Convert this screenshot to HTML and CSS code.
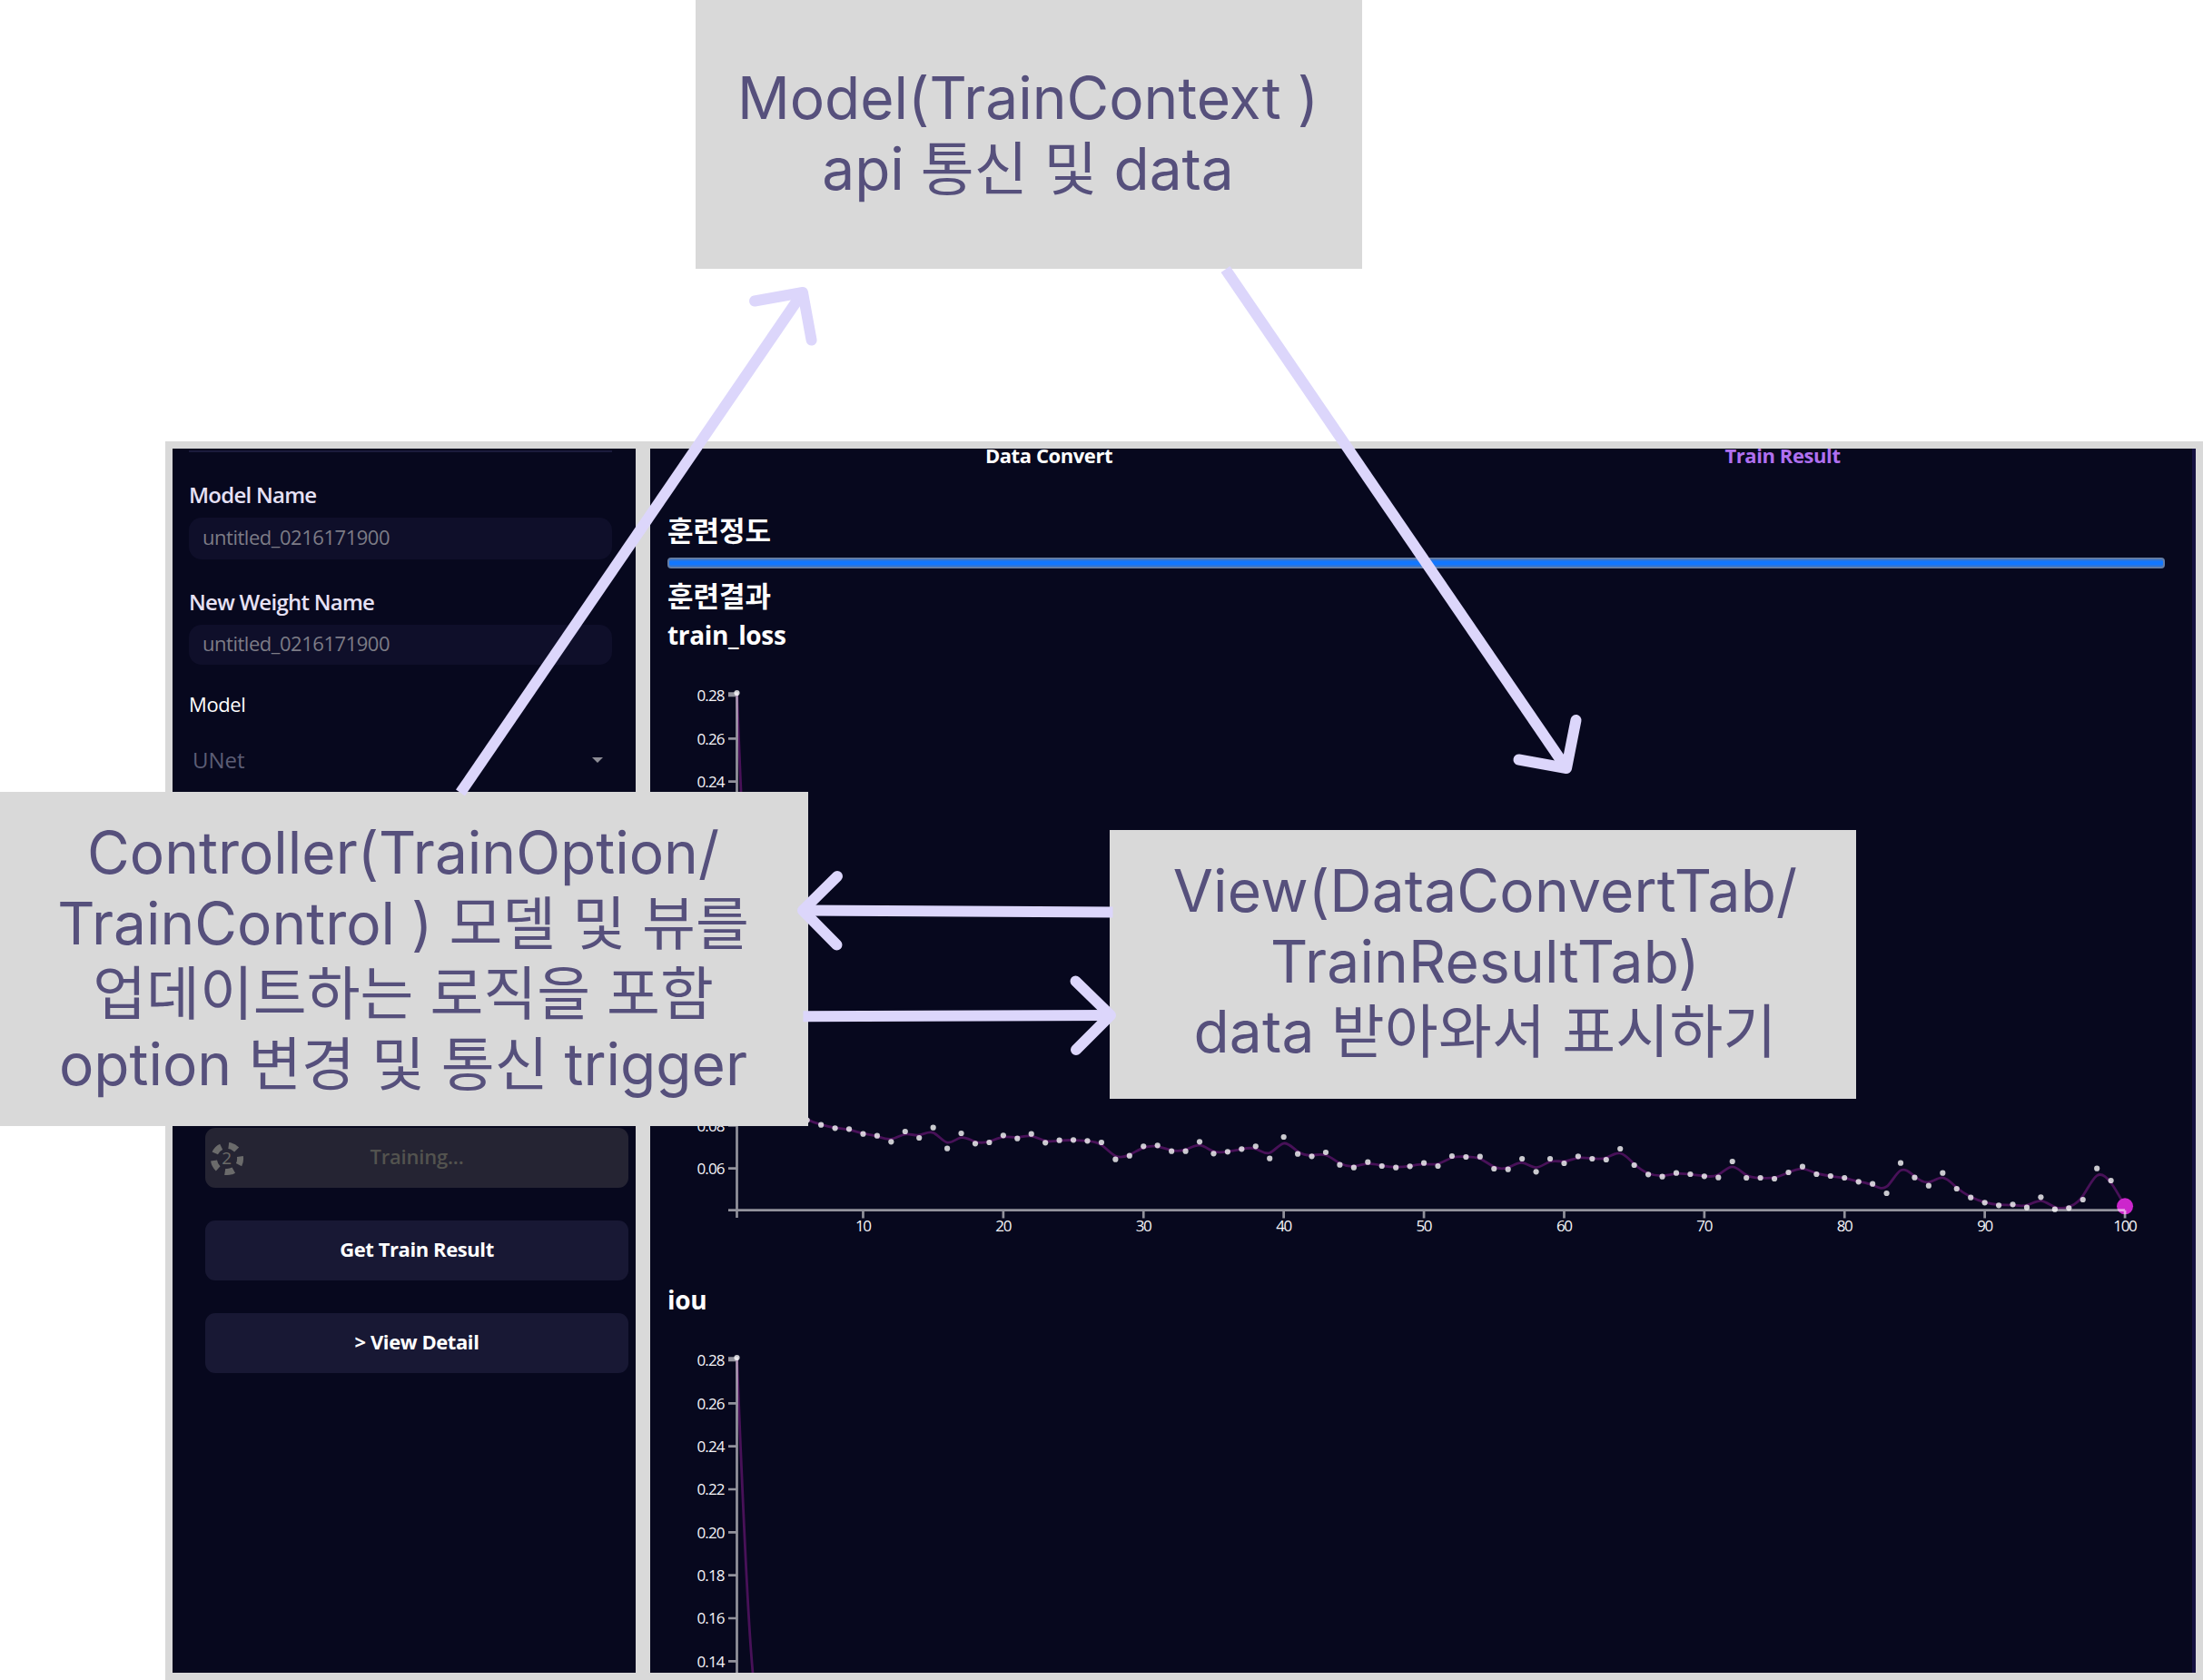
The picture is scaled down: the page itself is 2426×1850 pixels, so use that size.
FILE: index.html
```html
<!DOCTYPE html>
<html lang="ko">
<head>
<meta charset="utf-8">
<title>Train MVC</title>
<link rel="stylesheet" href="styles.css">
</head>
<body>
<main class="board">
  <div class="app">
    <aside class="sidebar">
      <hr class="divider">
      <label class="label">Model Name</label>
      <div class="input">untitled_0216171900</div>
      <label class="label second">New Weight Name</label>
      <div class="input short">untitled_0216171900</div>
      <label class="label model">Model</label>
      <div class="select">UNet<i class="caret"></i></div>
      <div class="actions">
        <button class="btn busy">
          <svg class="spinner" viewBox="0 0 40 40"><circle cx="20" cy="20" r="14.6"/><text x="19.5" y="26">2</text></svg>
          Training...
        </button>
        <button class="btn">Get Train Result</button>
        <button class="btn">&gt; View Detail</button>
      </div>
    </aside>
    <section class="result">
      <nav class="tabs"><b class="tab">Data Convert</b><b class="tab active">Train Result</b></nav>
      <h2 class="heading">훈련정도</h2>
      <div class="progress"></div>
      <h2 class="heading">훈련결과</h2>
      <article class="metric"><h3>train_loss</h3><svg class="chart" viewBox="716 717 1698 694" data-ticks="12"></svg></article>
      <article class="metric"><h3>iou</h3><svg class="chart" viewBox="716 717 1698 694" data-ticks="8"></svg></article>
    </section>
  </div>

  <div class="note note-model">Model(TrainContext )<br>api 통신 및 data</div>
  <div class="note note-controller">Controller(TrainOption/<br>TrainControl ) 모델 및 뷰를<br>업데이트하는 로직을 포함<br>option 변경 및 통신 trigger</div>
  <div class="note note-view">View(DataConvertTab/<br>TrainResultTab)<br>data 받아와서 표시하기</div>

  <svg class="arrows" viewBox="0 0 2426 1850">
    <path d="M507 873L884 322"/>
    <path class="head" d="M831 331.5L884 322L893.6 374.5"/>
    <path d="M1349.5 296.5L1725 846"/>
    <path class="head" d="M1672.5 836.5L1725 846L1735.5 793"/>
    <path d="M1225.5 1004.4L884 1002.5"/>
    <path class="head" d="M922 965L884 1002.5L921.5 1040.5"/>
    <path d="M884.5 1119.3L1223 1118"/>
    <path class="head" d="M1184.5 1080.5L1223 1118L1185 1156"/>
  </svg>
</main>
<script src="chart.js"></script>
</body>
</html>
```
FILE: styles.css
```css
* { box-sizing: border-box; }

body {
  margin: 0;
  background: #fff;
  font-family: "Open Sans", "Noto Sans CJK KR", sans-serif;
}

.board {
  position: relative;
  width: 2426px;
  height: 1850px;
  padding: 486px 0 0 182px;
  overflow: hidden;
}

.app {
  display: grid;
  grid-template-columns: 510px 1702px;
  gap: 16px;
  height: 1364px;
  padding: 8px;
  background: #d9d9d9;
}

.sidebar,
.result {
  overflow: hidden;
  background: #07081e;
}

.sidebar {
  display: flex;
  flex-direction: column;
  padding: 2px 26px 0 18px;
}

.divider {
  flex: none;
  width: 100%;
  height: 2px;
  margin: 0 0 31px;
  border: 0;
  background: #1b1b3c;
}

.label {
  height: 32px;
  color: #e6e1f5;
  font-size: 24px;
  font-weight: 600;
  letter-spacing: -.75px;
  line-height: 32px;
}

.label.second { margin-top: 31px; }

.label.model {
  margin-top: 27px;
  color: #fff;
  font-size: 22px;
  font-weight: 500;
  letter-spacing: -.4px;
}

.input {
  display: flex;
  align-items: center;
  height: 46px;
  margin-top: 9px;
  padding: 0 15px 4px;
  border-radius: 14px;
  background: #0f0f2a;
  color: #7d7c86;
  font-size: 22px;
  letter-spacing: -.47px;
}

.input.short {
  height: 44px;
  padding-bottom: 5px;
}

.select {
  display: flex;
  align-items: center;
  justify-content: space-between;
  height: 32px;
  margin-top: 30px;
  padding: 0 10px 0 4px;
  color: #5c5d75;
  font-size: 24px;
  line-height: 32px;
}

.caret {
  border: 6px solid transparent;
  border-top-color: #8d8d96;
  border-bottom: 0;
}

.actions {
  display: grid;
  gap: 36px;
  width: 466px;
  margin: 389px 0 0 18px;
}

.btn {
  position: relative;
  height: 66px;
  padding: 0 0 5px;
  border: 0;
  border-radius: 11px;
  background: #181834;
  color: #fff;
  font: 700 22px/30px "Open Sans", sans-serif;
  letter-spacing: -.42px;
}

.btn.busy {
  background: #252433;
  color: #53534f;
  font-weight: 600;
  letter-spacing: -.2px;
}

.spinner {
  position: absolute;
  top: 14px;
  left: 4px;
  width: 40px;
  height: 40px;
}

.spinner circle {
  fill: none;
  stroke: #6b6b6b;
  stroke-width: 7;
  stroke-dasharray: 10 8.35;
  stroke-dashoffset: 3.2;
}

.spinner text {
  fill: #6b6b68;
  font-size: 19px;
  font-weight: 400;
  text-anchor: middle;
}

.tabs {
  display: flex;
  height: 30px;
  margin: -8px 47px 0 35px;
  color: #fff;
  font-size: 22px;
  letter-spacing: -.42px;
  line-height: 30px;
}

.tab {
  flex: 1;
  text-align: center;
}

.tab.active { color: #b070f0; }

.heading,
.metric h3 {
  height: 38px;
  margin: 0 0 0 19px;
  color: #fff;
  font-weight: 700;
  line-height: 38px;
}

.heading { font-size: 31px; }
.tabs + .heading { margin-top: 49px; }

.progress {
  width: 1649px;
  height: 12px;
  margin: 11px 0 11px 19px;
  border: 2px solid #637da6;
  border-radius: 4px;
  background: linear-gradient(#2b75dc 0 2px, #1277ff 2px 6px, #2b75dc 6px);
}

.metric { height: 732px; }
.progress + .heading { margin-bottom: 4px; }

.metric h3 {
  padding-top: 1px;
  font-size: 28px;
  letter-spacing: -.35px;
}

.chart {
  display: block;
  width: 1698px;
  height: 694px;
  overflow: visible;
}

.result {
  border-right: 4px solid #141040;
}

.axis {
  fill: none;
  stroke: rgba(255, 255, 255, .56);
  stroke-width: 2.7;
}

.tick {
  fill: #f4f4f8;
  font-size: 17px;
  font-weight: 500;
}

.tick-y { text-anchor: end; }
.tick-x { text-anchor: middle; }

.series {
  fill: none;
  stroke: #481158;
  stroke-width: 2.8;
}

.dot { fill: rgba(255, 255, 255, .79); }
.dot-last { fill: #cc26cc; }

.note {
  position: absolute;
  background: #d9d9d9;
  color: #56507c;
  font: 400 64px/77.6px Inter, "Noto Sans CJK KR", sans-serif;
  text-align: center;
  white-space: nowrap;
}

.note-model { left: 766px; top: 0; width: 734px; height: 296px; padding: 69px 2px 0 0; }
.note-controller { left: 0; top: 872px; width: 890px; height: 368px; padding: 28px 2px 0 0; }
.note-view { left: 1222px; top: 914px; width: 822px; height: 296px; padding: 28px 0 0 5px; letter-spacing: .2px; }

.arrows {
  position: absolute;
  inset: 0;
  width: 2426px;
  height: 1850px;
}

.arrows path {
  fill: none;
  stroke: #dcd6fb;
  stroke-width: 12;
}

.arrows .head {
  stroke-linecap: round;
  stroke-linejoin: round;
}
```
FILE: chart.js
```js
const SVG_NS = "http://www.w3.org/2000/svg";
const X0 = 811.5, STEP = 15.44, BASE = 1332.7;

// Vertical offsets of epochs 7..100, in thirds of a pixel below y = 1200.
const tail = [
  116,127,130,146,152,172,138,159,125,194,144,178,174,151,161,146,175,167,166,169,174,230,218,187,
  184,203,203,172,211,205,196,187,227,156,212,220,207,248,257,239,252,257,253,242,252,219,222,221,
  261,263,228,271,228,243,220,228,231,195,249,280,287,275,279,286,290,237,291,291,294,273,254,279,
  285,291,304,311,342,242,290,317,275,327,356,373,382,379,389,355,395,391,363,260,300,385
];
const ys = [763, 1140, 1187, 1208, 1222, 1233.5, ...tail.map(v => 1200 + v / 3)];
const points = ys.map((y, i) => [X0 + i * STEP, y]);

function add(svg, name, attrs, text) {
  const el = document.createElementNS(SVG_NS, name);
  for (const key in attrs) el.setAttribute(key, attrs[key]);
  if (text) el.textContent = text;
  svg.append(el);
}

// Cubic B-spline through the neighbourhood of every point.
function basis(p) {
  const mix = (a, b, wa, wb) => `${((a[0] * wa + b[0] * wb) / 3).toFixed(2)} ${((a[1] * wa + b[1] * wb) / 3).toFixed(2)}`;
  const knot = (a, b, c) => `${((a[0] + 4 * b[0] + c[0]) / 6).toFixed(2)} ${((a[1] + 4 * b[1] + c[1]) / 6).toFixed(2)}`;
  let d = `M${p[0].join(" ")}L${knot(p[0], p[0], p[1])}`;
  for (let i = 1; i < p.length; i++) {
    const next = p[i + 1] || p[i];
    d += `C${mix(p[i - 1], p[i], 2, 1)} ${mix(p[i - 1], p[i], 1, 2)} ${knot(p[i - 1], p[i], next)}`;
  }
  return d + `L${p[p.length - 1].join(" ")}`;
}

document.querySelectorAll(".chart").forEach(svg => {
  const ticks = Number(svg.dataset.ticks);
  add(svg, "path", { class: "series", d: basis(points) });
  points.forEach(([cx, cy], i) => {
    const last = i === points.length - 1;
    add(svg, "circle", { class: last ? "dot-last" : "dot", cx, cy, r: last ? 9 : 3.1 });
  });

  let axis = `M802 763.5H${X0}V${BASE}M802 ${BASE}H2340`;
  for (let i = 0; i < ticks; i++) {
    const y = 766 + i * 47.33;
    axis += `M802 ${y}H810.5`;
    // Labels 0.22 to 0.10 of the full chart lie under the controller note.
    if (ticks === 12 && i > 2 && i < 10) continue;
    add(svg, "text", { class: "tick tick-y", x: 798.5, y: y + 6.3, textLength: 31 }, (0.28 - i * 0.02).toFixed(2));
  }
  axis += `M${X0} ${BASE}V1341`;
  for (let n = 10; n <= 100 && ticks === 12; n += 10) {
    const x = X0 + (n - 1) * STEP;
    axis += `M${x} ${BASE}V1341.5`;
    add(svg, "text", { class: "tick tick-x", x: x + .5, y: 1356, textLength: n === 100 ? 26.5 : 18 }, String(n));
  }
  add(svg, "path", { class: "axis", d: axis });
});
```
